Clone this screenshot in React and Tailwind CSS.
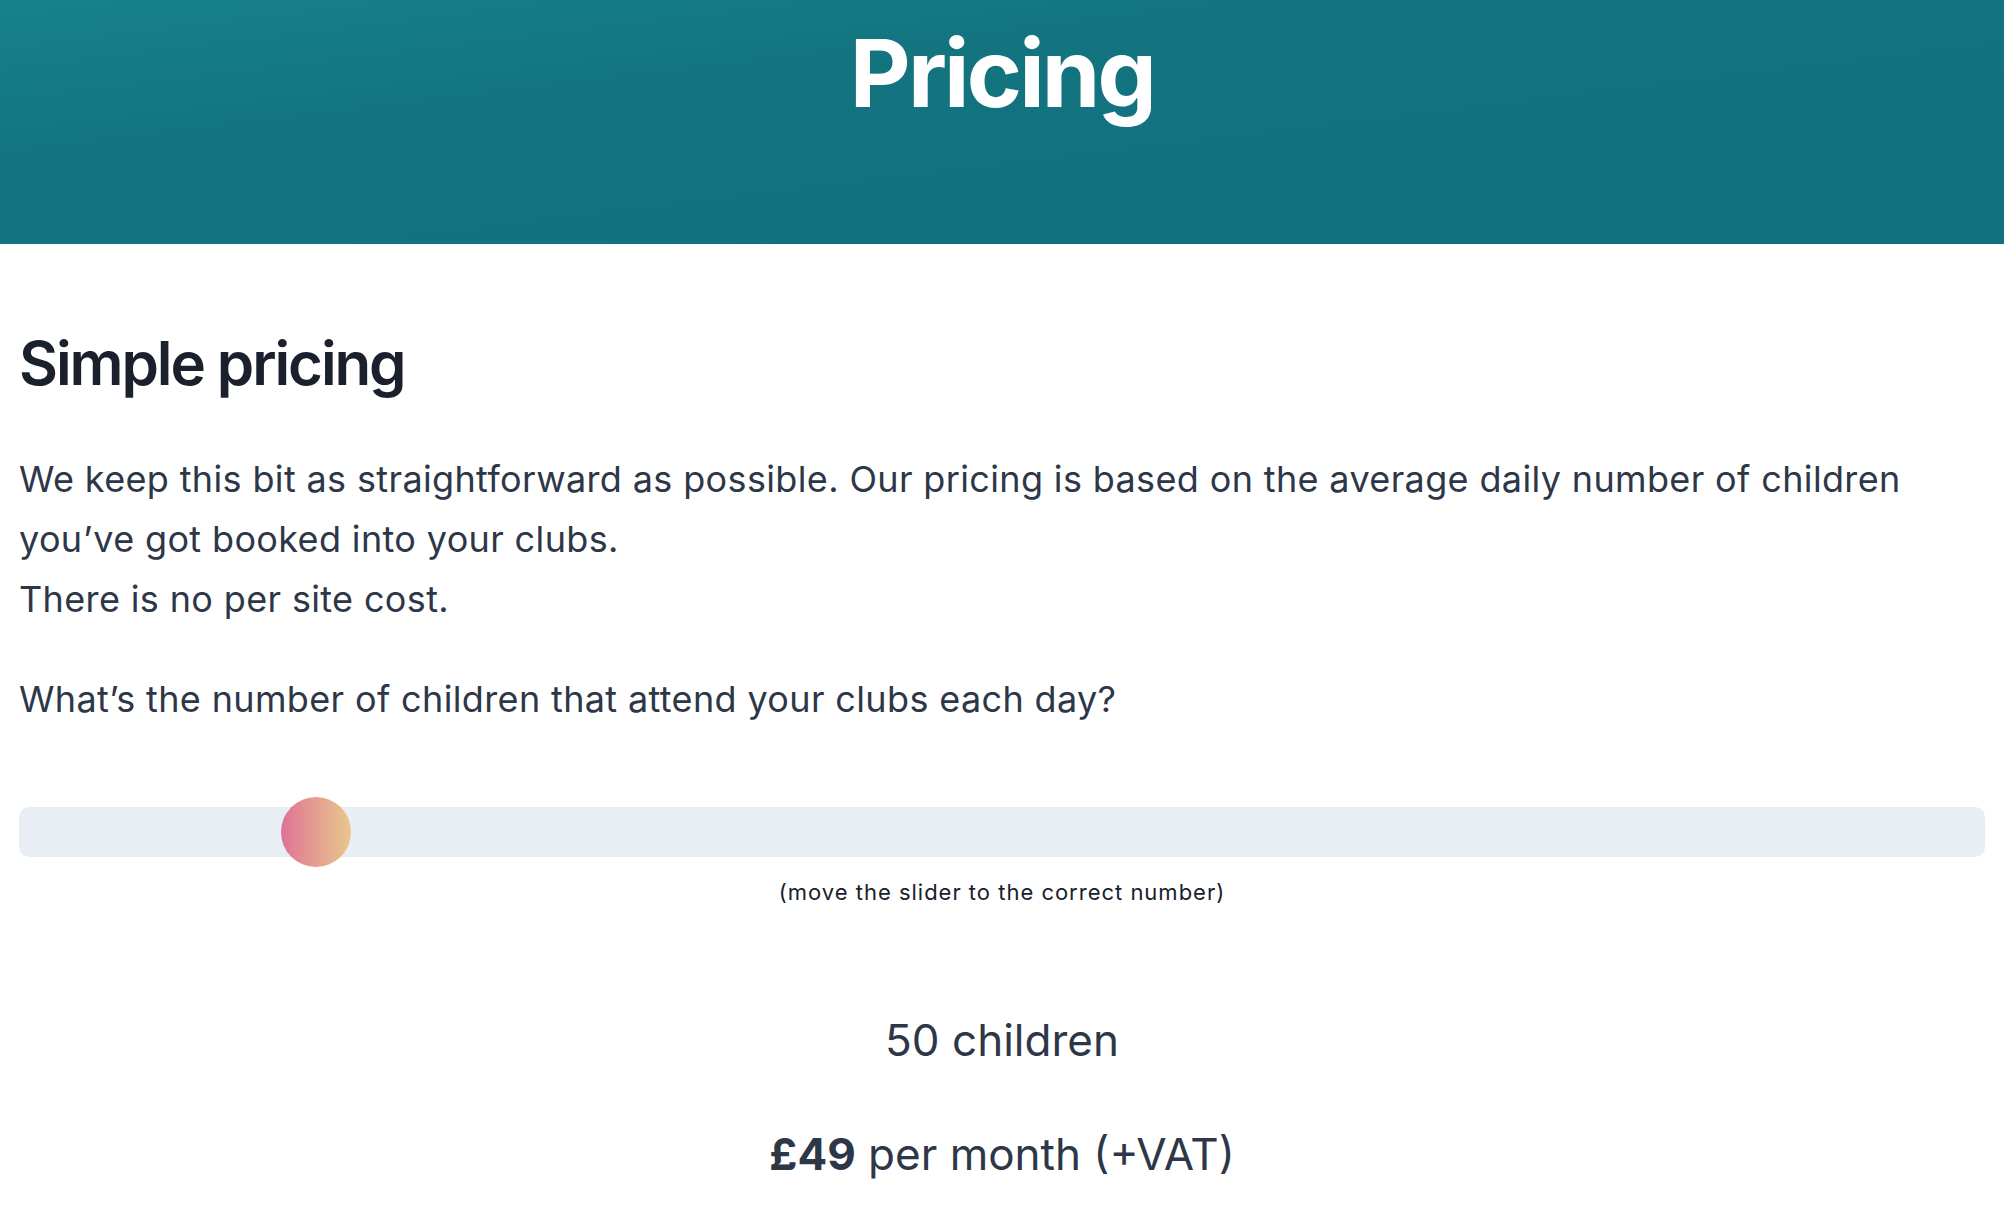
/**
 * Pricing page
 * Header banner, intro copy and the children-per-day slider with the monthly price
 */

import { useState } from 'react';

const MIN = 10;
const MAX = 300;

function priceFor(children) {
  // flat tier for small clubs
  if (children <= 50) return 49;
  return 49 + Math.ceil((children - 50) / 25) * 15;
}

function Slider({ value }) {
  const p = (value - MIN) / (MAX - MIN);
  return (
    <div className="relative h-[50px] w-full rounded-[10px] bg-[#e9edf4]">
      <div
        className="absolute top-[-10px] h-[70px] w-[70px] rounded-full bg-gradient-to-r from-[#df7195] to-[#e6c88a]"
        style={{ left: `calc(${p * 100}% - ${p * 70}px)` }}
      />
    </div>
  );
}

export default function App() {
  const [children] = useState(50);

  return (
    <div className="min-h-screen bg-white font-['Inter',sans-serif]">
      {/* Header */}
      <header className="h-[244px] bg-gradient-to-br from-[#16828a] via-[#13737f] via-35% to-[#13707f] pt-[26px]">
        <h1 className="text-center text-[94px] font-bold leading-none tracking-[-0.03em] text-white">
          Pricing
        </h1>
      </header>

      {/* Main Content */}
      <main className="px-[19px] pt-[89px]">
        <h2 className="text-[60px] font-semibold leading-none tracking-[-0.035em] text-[#1a202c]">
          Simple pricing
        </h2>

        <p className="mt-[56px] text-[36px] leading-[60px] tracking-[0.01em] text-[#2d3748]">
          We keep this bit as straightforward as possible. Our pricing is based on the average daily number of children
          you’ve got booked into your clubs.
          <br />
          There is no per site cost.
        </p>

        <p className="mt-[40px] text-[36px] leading-[60px] tracking-[0.01em] text-[#2d3748]">
          What’s the number of children that attend your clubs each day?
        </p>

        <div className="mt-[78px]">
          <Slider value={children} />
        </div>
        <p className="mt-[19px] text-center text-[22px] leading-[32px] tracking-[0.045em] text-[#1a202c]">
          (move the slider to the correct number)
        </p>

        <p className="mt-[110px] text-center text-[44px] leading-none text-[#2d3748]">
          {children} children
        </p>
        <p className="mt-[70px] text-center text-[44px] leading-none text-[#2d3748]">
          <span className="font-bold">£{priceFor(children)}</span> per month (+VAT)
        </p>
      </main>
    </div>
  );
}
